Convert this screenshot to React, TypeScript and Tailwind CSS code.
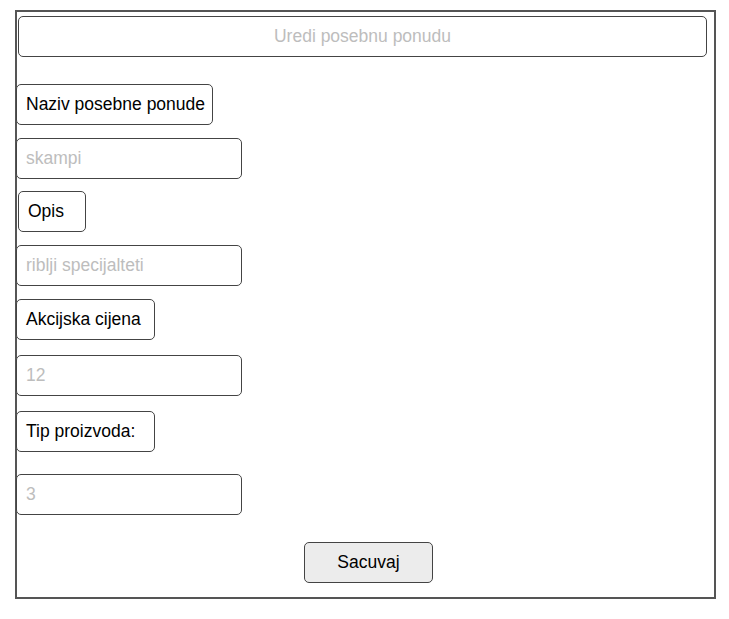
const font = "font-['Liberation_Sans',Arial,sans-serif]"

function Label({ text, className }: { text: string; className: string }) {
    return (
        <div className={`flex h-[41px] items-center rounded-[5px] border border-[#444] bg-white pl-[9px] text-[17.5px] text-black ${className}`}>
            {text}
        </div>
    )
}

function Field({ value, className }: { value: string; className: string }) {
    return (
        <div className={`ml-[-1px] flex h-[41px] w-[226px] items-center rounded-[5px] border border-[#444] bg-white pl-[9px] text-[17.5px] text-[#bdbdbd] ${className}`}>
            {value}
        </div>
    )
}

export default function App() {
    return (
        <div className={`min-h-[619px] w-[729px] bg-white pt-[10px] pl-[15px] ${font}`}>
            <div className="flex h-[589px] w-[701px] flex-col items-start border-2 border-[#555]">
                {/* header */}
                <div className="mt-[4px] ml-[1px] flex h-[41px] w-[689px] items-center justify-center rounded-[5px] border border-[#444] text-[17.5px] text-[#bdbdbd]">
                    Uredi posebnu ponudu
                </div>

                <Label text="Naziv posebne ponude" className="mt-[27px] ml-[-1px] w-[197px]" />
                <Field value="skampi" className="mt-[13px]" />

                <Label text="Opis" className="mt-[12px] ml-[1px] w-[68px]" />
                <Field value="riblji specijalteti" className="mt-[13px]" />

                <Label text="Akcijska cijena" className="mt-[13px] ml-[-1px] w-[139px]" />
                <Field value="12" className="mt-[15px]" />

                <Label text="Tip proizvoda:" className="mt-[15px] ml-[-1px] w-[139px]" />
                <Field value="3" className="mt-[22px]" />

                <button className="mt-[27px] ml-[287px] flex h-[41px] w-[129px] items-center justify-center rounded-[5px] border border-[#444] bg-[#ececec] text-[17.5px] text-black">
                    Sacuvaj
                </button>
            </div>
        </div>
    )
}
